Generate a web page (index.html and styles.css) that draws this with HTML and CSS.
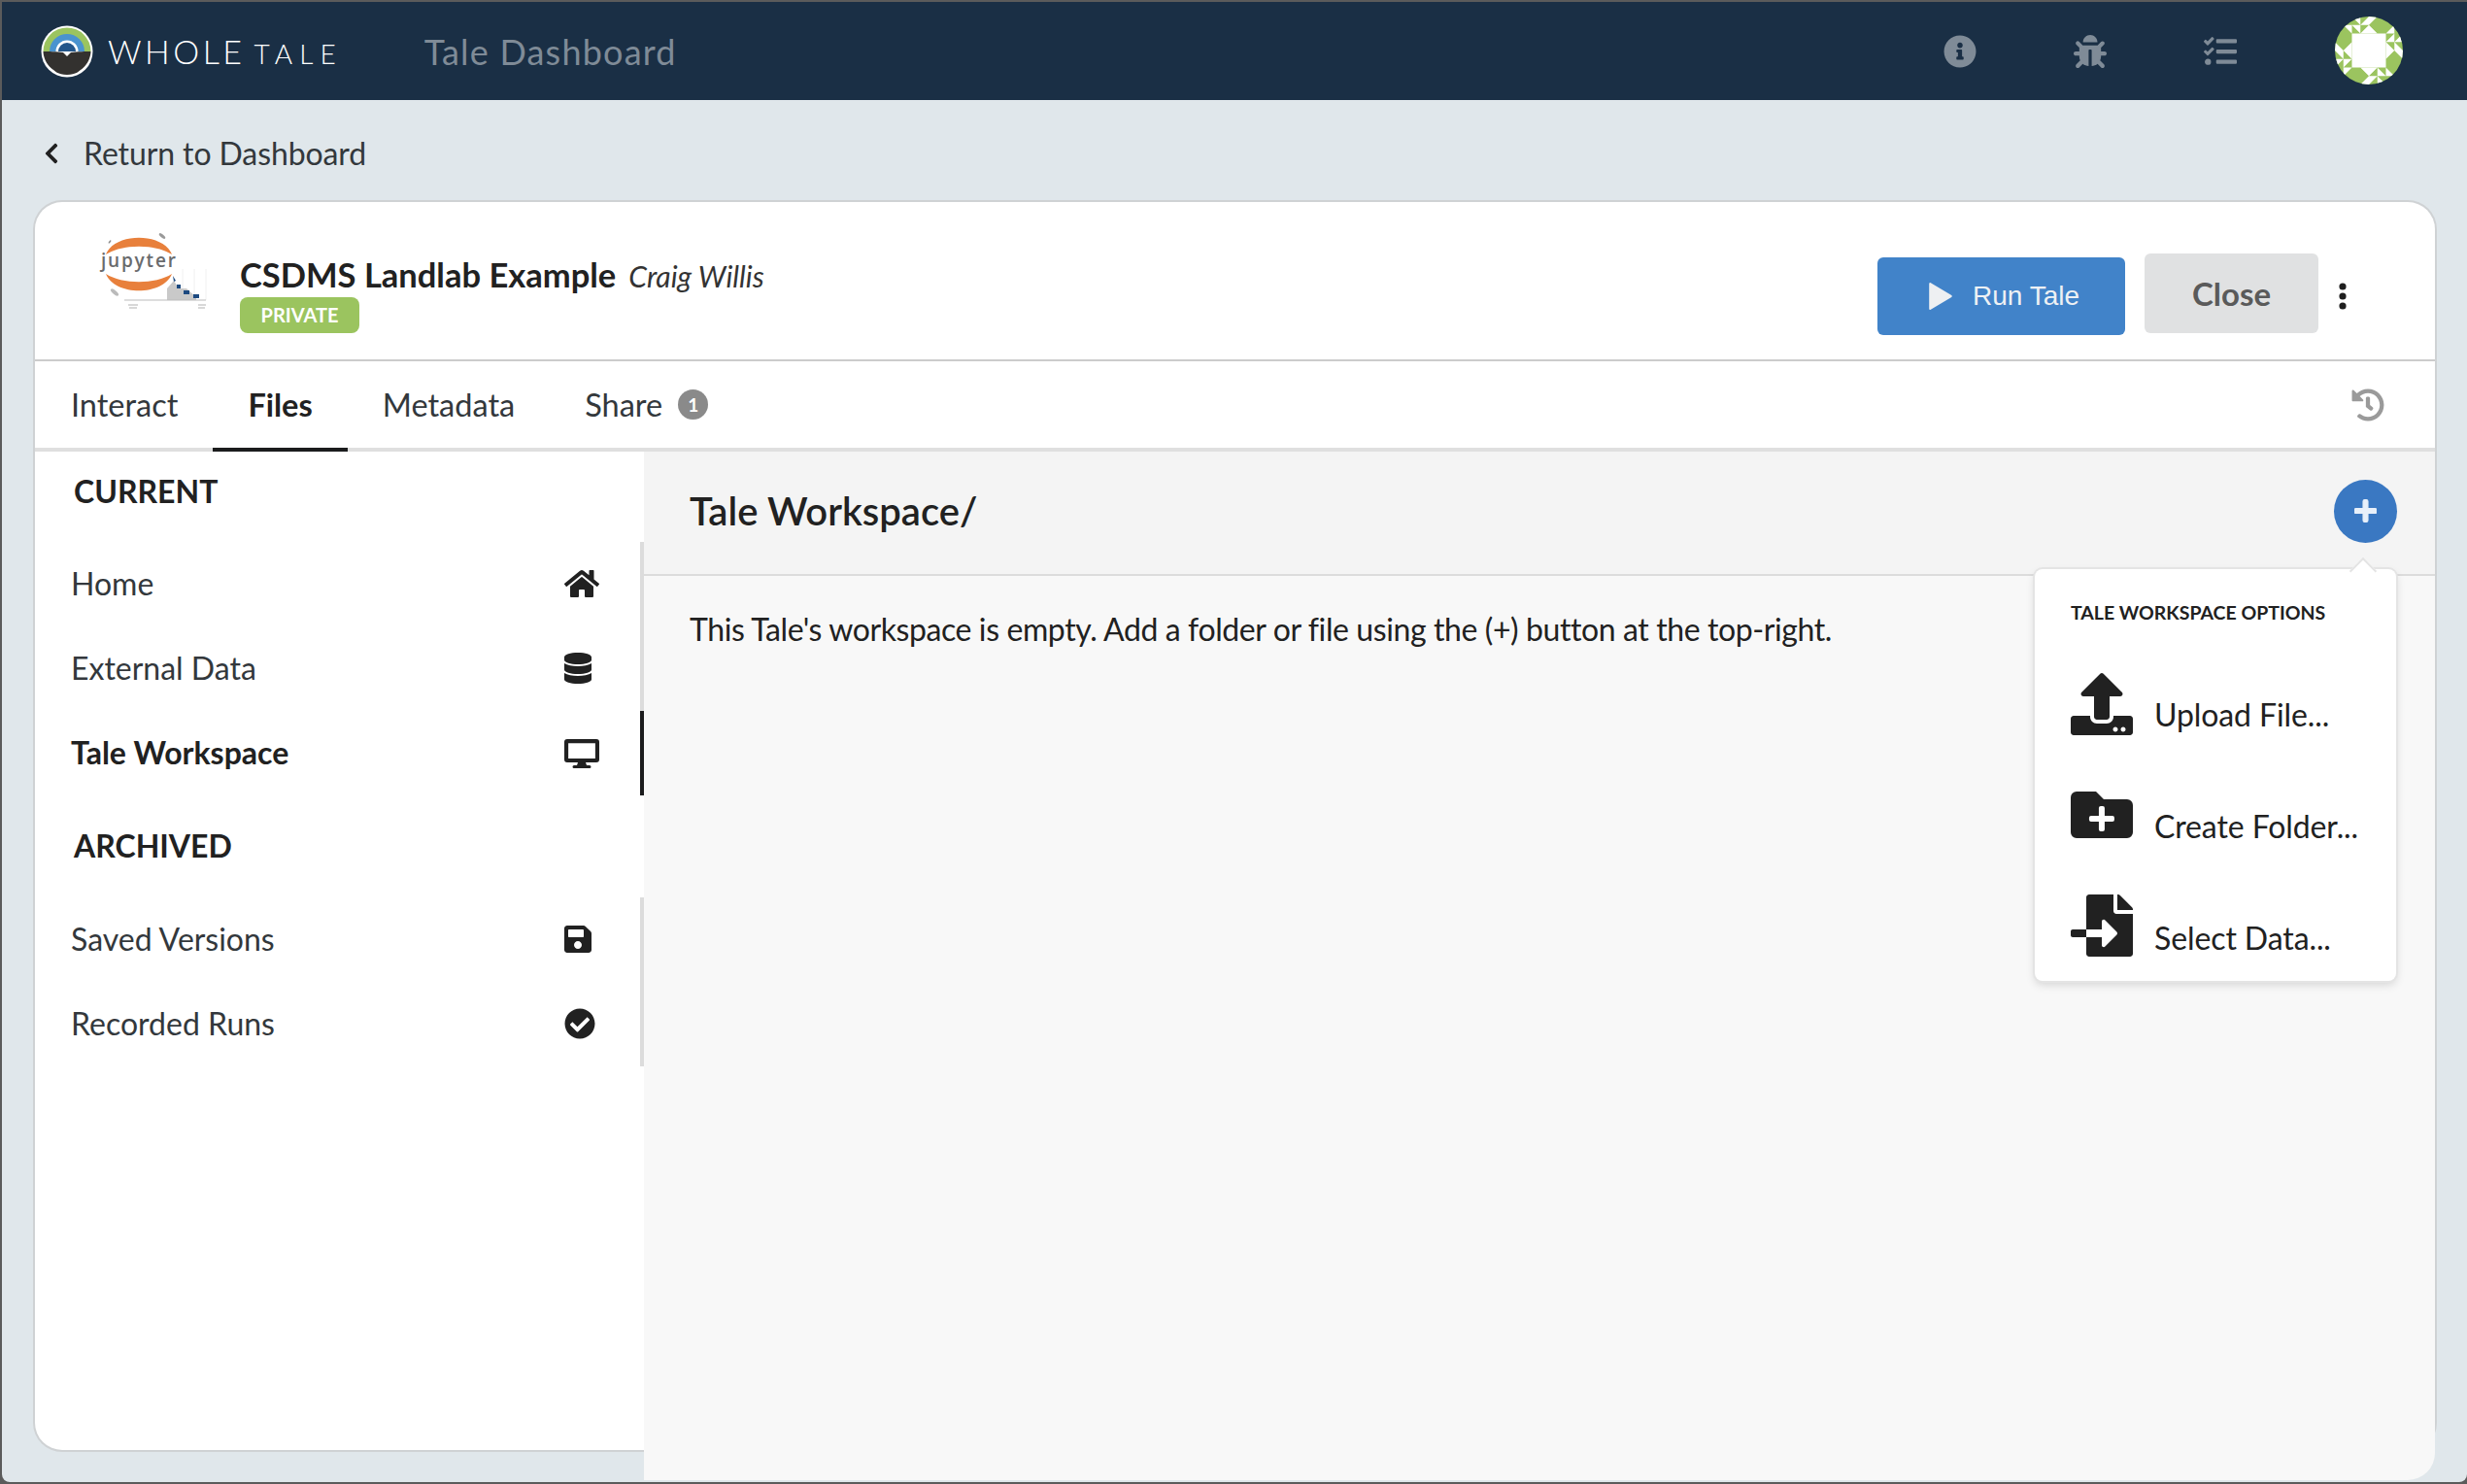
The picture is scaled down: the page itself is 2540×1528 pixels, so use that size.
FILE: index.html
```html
<!DOCTYPE html>
<html>

<head>
    <meta charset="UTF-8" />
    <title>Tale Dashboard</title>
    <link rel="stylesheet" href="styles.css">
</head>

<body>
    <div class="window">
        <nav class="navbar">
            <svg class="logo" viewBox="0 0 54 54">
                <circle cx="27" cy="27" r="26.5" fill="#fff" />
                <path d="M2.5 27a24.5 24.5 0 0 1 49 0z" fill="#9bc45f" />
                <path d="M9 27a18 18 0 0 1 36 0z" fill="#4a93cf" />
                <path d="M15.5 27a11.5 11.5 0 0 1 23 0z" fill="#fff" />
                <path d="M18 27a9 9 0 0 1 18 0z" fill="#24568a" />
                <path d="M2.5 27c4 0 15 0 20.5 1l4 4 4-4c5.5-1 16.5-1 20.5-1 0 5-3 13-8 17-4 3-7 7-16.5 7s-12.5-4-16.5-7c-5-4-8-12-8-17z" fill="#33312f" />
            </svg>
            <span class="brand">WHOLE<span class="brand-small">TALE</span></span>
            <span class="nav-title">Tale Dashboard</span>
            <div class="nav-icons">
                <svg class="nav-icon" viewBox="0 0 512 512"><path d="M256 8C119.043 8 8 119.083 8 256c0 136.997 111.043 248 248 248s248-111.003 248-248C504 119.083 392.957 8 256 8zm0 110c23.196 0 42 18.804 42 42s-18.804 42-42 42-42-18.804-42-42 18.804-42 42-42zm56 254c0 6.627-5.373 12-12 12h-88c-6.627 0-12-5.373-12-12v-24c0-6.627 5.373-12 12-12h12v-64h-12c-6.627 0-12-5.373-12-12v-24c0-6.627 5.373-12 12-12h64c6.627 0 12 5.373 12 12v100h12c6.627 0 12 5.373 12 12v24z" /></svg>
                <svg class="nav-icon" viewBox="0 0 512 512"><path d="M511.988 288.9c-.478 17.43-15.217 31.1-32.653 31.1H424v16c0 21.864-4.882 42.584-13.6 61.145l60.228 60.228c12.496 12.497 12.496 32.758 0 45.255-12.498 12.497-32.759 12.496-45.256 0l-54.736-54.736C345.886 467.965 314.351 480 280 480V236c0-6.627-5.373-12-12-12h-24c-6.627 0-12 5.373-12 12v244c-34.351 0-65.886-12.035-90.636-32.108l-54.736 54.736c-12.498 12.497-32.759 12.496-45.256 0-12.496-12.497-12.496-32.758 0-45.255l60.228-60.228C92.882 378.584 88 357.864 88 336v-16H32.666C15.23 320 .491 306.33.013 288.9-.484 270.816 14.028 256 32 256h56v-58.745l-46.628-46.628c-12.496-12.497-12.496-32.758 0-45.255 12.498-12.497 32.758-12.497 45.256 0L141.255 160h229.489l54.627-54.627c12.498-12.497 32.758-12.497 45.256 0 12.496 12.497 12.496 32.758 0 45.255L424 197.255V256h56c17.972 0 32.484 14.816 31.988 32.9zM257 0c-61.856 0-112 50.144-112 112h224C369 50.144 318.856 0 257 0z" /></svg>
                <svg class="nav-icon" viewBox="0 0 512 512"><path d="M139.61 35.5a12 12 0 0 0-17 0L58.93 98.81l-22.7-22.12a12 12 0 0 0-17 0L3.53 92.41a12 12 0 0 0 0 17l47.59 47.4a12.78 12.78 0 0 0 17.61 0l15.59-15.62L156.52 69a12.09 12.09 0 0 0 .09-17zm0 159.19a12 12 0 0 0-17 0l-63.68 63.72-22.7-22.1a12 12 0 0 0-17 0L3.53 252a12 12 0 0 0 0 17L51 316.5a12.77 12.77 0 0 0 17.6 0l15.7-15.69 72.2-72.22a12 12 0 0 0 .09-16.9zM64 368c-26.49 0-48.59 21.5-48.59 48S37.53 464 64 464a48 48 0 0 0 0-96zm432 16H208a16 16 0 0 0-16 16v32a16 16 0 0 0 16 16h288a16 16 0 0 0 16-16v-32a16 16 0 0 0-16-16zm0-320H208a16 16 0 0 0-16 16v32a16 16 0 0 0 16 16h288a16 16 0 0 0 16-16V80a16 16 0 0 0-16-16zm0 160H208a16 16 0 0 0-16 16v32a16 16 0 0 0 16 16h288a16 16 0 0 0 16-16v-32a16 16 0 0 0-16-16z" /></svg>
                <svg class="avatar" viewBox="0 0 8 8">
                    <circle cx="4" cy="4" r="4" fill="#9bc45f" />
                    <clipPath id="avatar-clip"><circle cx="4" cy="4" r="4" /></clipPath>
                    <g clip-path="url(#avatar-clip)" fill="#fff">
                        <rect x="2" y="2" width="4" height="4" />
                        <path id="quilt" d="M2 0h1v1zM3 1h1V0zM1 1h1v1zM2 1l1 1V1zM3 2h1V1zM4 1v1h1zM5 0H4v1z" />
                        <use href="#quilt" transform="rotate(90 4 4)" />
                        <use href="#quilt" transform="rotate(180 4 4)" />
                        <use href="#quilt" transform="rotate(270 4 4)" />
                    </g>
                </svg>
            </div>
        </nav>

        <a class="back-link">
            <svg class="back-icon" viewBox="0 0 320 512"><path d="M34.52 239.03L228.87 44.69c9.37-9.37 24.57-9.37 33.94 0l22.67 22.67c9.36 9.36 9.38 24.52.04 33.9L131.49 256l154.02 154.75c9.34 9.38 9.32 24.54-.04 33.9l-22.67 22.67c-9.37 9.37-24.57 9.37-33.94 0L34.52 272.97c-9.37-9.37-9.37-24.57 0-33.94z" /></svg>
            Return to Dashboard
        </a>

        <main class="card">
            <header class="card-header">
                <svg class="tale-image" viewBox="0 0 116 82">
                    <path d="M11 23C20 0 70 0 79 23 62 12 28 12 11 23z" fill="#e8803c" />
                    <path d="M11 43C28 54 62 54 79 43 70 66 20 66 11 43z" fill="#e8803c" />
                    <ellipse cx="15" cy="10" rx="2" ry=".8" fill="#888" transform="rotate(-50 15 10)" />
                    <ellipse cx="69" cy="4" rx="4" ry="1.6" fill="#999" transform="rotate(40 69 4)" />
                    <ellipse cx="20" cy="62" rx="5" ry="2" fill="#bbb" transform="rotate(40 20 62)" />
                    <path d="M90 38V70M102 38V70M114 38V70" stroke="#f0f0f0" stroke-width="1" />
                    <path d="M74 70V58l7-8 5 8h8l10 9v3z" fill="#c9c9c9" />
                    <path d="M80 45l3 5-2 1zM84 54h4v4h-4zM91 60h6v4h-6zM101 64h6v4h-6z" fill="#1d4a80" />
                    <path d="M30 70H114" stroke="#bbb" stroke-width="1" />
                    <path d="M34 75h10M35 78h8M106 75h8M106 78h7" stroke="#ccc" stroke-width="1.4" />
                    <text x="6" y="36" class="jupyter-word">jupyter</text>
                </svg>
                <div class="tale-info">
                    <div class="tale-name">
                        <span class="tale-title">CSDMS Landlab Example</span>
                        <em class="tale-author">Craig Willis</em>
                    </div>
                    <span class="label-private">PRIVATE</span>
                </div>
                <div class="tale-actions">
                    <button class="btn-run">
                        <svg class="play-icon" viewBox="0 0 24 28"><path d="M2 2L22 14 2 26z" /></svg>
                        Run Tale
                    </button>
                    <button class="btn-close">Close</button>
                    <svg class="more-icon" viewBox="0 0 10 28">
                        <circle cx="5" cy="4" r="3.6" />
                        <circle cx="5" cy="14" r="3.6" />
                        <circle cx="5" cy="24" r="3.6" />
                    </svg>
                </div>
            </header>

            <div class="tabs">
                <a class="tab">Interact</a>
                <a class="tab active">Files</a>
                <a class="tab">Metadata</a>
                <a class="tab">Share <span class="count">1</span></a>
                <svg class="history-icon" viewBox="0 0 512 512"><path d="M504 255.531c.253 136.64-111.18 248.372-247.82 248.468-59.015.042-113.223-20.53-155.822-54.911-11.077-8.94-11.905-25.541-1.839-35.607l11.267-11.267c8.609-8.609 22.353-9.551 31.891-1.984C173.062 425.135 212.781 440 256 440c101.705 0 184-82.311 184-184 0-101.705-82.311-184-184-184-48.814 0-93.149 18.969-126.068 49.932l50.754 50.754c10.08 10.08 2.941 27.314-11.313 27.314H24c-8.837 0-16-7.163-16-16V38.627c0-14.254 17.234-21.393 27.314-11.314l49.372 49.372C129.209 34.136 189.552 8 256 8c136.81 0 247.747 110.78 248 247.531zm-180.912 78.784l9.823-12.63c8.138-10.463 6.253-25.542-4.21-33.679L288 256.349V152c0-13.255-10.745-24-24-24h-16c-13.255 0-24 10.745-24 24v135.651l65.409 50.874c10.463 8.137 25.541 6.253 33.679-4.21z" /></svg>
            </div>

            <div class="files">
                <aside class="sidebar">
                    <h3 class="side-heading first">CURRENT</h3>
                    <ul class="side-list">
                        <li class="side-item">Home
                            <svg class="side-icon" viewBox="0 0 576 512"><path d="M280.37 148.26L96 300.11V464a16 16 0 0 0 16 16l112.06-.29a16 16 0 0 0 15.92-16V368a16 16 0 0 1 16-16h64a16 16 0 0 1 16 16v95.64a16 16 0 0 0 16 16.05L464 480a16 16 0 0 0 16-16V300L295.67 148.26a12.19 12.19 0 0 0-15.3 0zM571.6 251.47L488 182.56V44.05a12 12 0 0 0-12-12h-56a12 12 0 0 0-12 12v72.61L318.47 43a48 48 0 0 0-61 0L4.34 251.47a12 12 0 0 0-1.6 16.9l25.5 31A12 12 0 0 0 45.15 301l235.22-193.74a12.19 12.19 0 0 1 15.3 0L530.9 301a12 12 0 0 0 16.9-1.6l25.5-31a12 12 0 0 0-1.7-16.93z" /></svg>
                        </li>
                        <li class="side-item">External Data
                            <svg class="side-icon narrow" viewBox="0 0 448 512"><path d="M448 73.143v45.714C448 159.143 347.667 192 224 192S0 159.143 0 118.857V73.143C0 32.857 100.333 0 224 0s224 32.857 224 73.143zM448 176v102.857C448 319.143 347.667 352 224 352S0 319.143 0 278.857V176c48.125 33.143 136.208 48.572 224 48.572S399.874 209.143 448 176zm0 160v102.857C448 479.143 347.667 512 224 512S0 479.143 0 438.857V336c48.125 33.143 136.208 48.572 224 48.572S399.874 369.143 448 336z" /></svg>
                        </li>
                        <li class="side-item active">Tale Workspace
                            <svg class="side-icon" viewBox="0 0 576 512"><path d="M48 32h480a48 48 0 0 1 48 48v288a48 48 0 0 1-48 48H352l16 48h48a24 24 0 0 1 0 48H160a24 24 0 0 1 0-48h48l16-48H48a48 48 0 0 1-48-48V80a48 48 0 0 1 48-48zm18 66v252h444V98z" fill-rule="evenodd" /></svg>
                        </li>
                    </ul>
                    <h3 class="side-heading">ARCHIVED</h3>
                    <ul class="side-list">
                        <li class="side-item">Saved Versions
                            <svg class="side-icon narrow" viewBox="0 0 448 512"><path d="M433.941 129.941l-83.882-83.882A48 48 0 0 0 316.118 32H48C21.49 32 0 53.49 0 80v352c0 26.51 21.49 48 48 48h352c26.51 0 48-21.49 48-48V163.882a48 48 0 0 0-14.059-33.941zM224 416c-35.346 0-64-28.654-64-64 0-35.346 28.654-64 64-64s64 28.654 64 64c0 35.346-28.654 64-64 64zm96-304.52V212c0 6.627-5.373 12-12 12H76c-6.627 0-12-5.373-12-12V108c0-6.627 5.373-12 12-12h228.52c3.183 0 6.235 1.264 8.485 3.515l3.48 3.48A11.996 11.996 0 0 1 320 111.48z" /></svg>
                        </li>
                        <li class="side-item">Recorded Runs
                            <svg class="side-icon round" viewBox="0 0 512 512"><path d="M504 256c0 136.967-111.033 248-248 248S8 392.967 8 256 119.033 8 256 8s248 111.033 248 248zM227.314 387.314l184-184c6.248-6.248 6.248-16.379 0-22.627l-22.627-22.627c-6.248-6.249-16.379-6.249-22.628 0L216 308.118l-70.059-70.059c-6.248-6.248-16.379-6.248-22.628 0l-22.627 22.627c-6.248 6.248-6.248 16.379 0 22.627l104 104c6.249 6.249 16.379 6.249 22.628.001z" /></svg>
                        </li>
                    </ul>
                </aside>

                <section class="panel">
                    <div class="panel-header">
                        <h2 class="panel-title">Tale Workspace/</h2>
                        <button class="btn-add">
                            <svg class="add-icon" viewBox="0 0 448 512"><path d="M416 208H272V64c0-17.67-14.33-32-32-32h-32c-17.67 0-32 14.33-32 32v144H32c-17.67 0-32 14.33-32 32v32c0 17.67 14.33 32 32 32h144v144c0 17.67 14.33 32 32 32h32c17.67 0 32-14.33 32-32V304h144c17.67 0 32-14.33 32-32v-32c0-17.67-14.33-32-32-32z" /></svg>
                        </button>
                    </div>
                    <p class="panel-text">This Tale's workspace is empty. Add a folder or file using the (+) button at the top-right.</p>

                    <div class="popup">
                        <div class="popup-heading">TALE WORKSPACE OPTIONS</div>
                        <div class="popup-item upload">
                            <svg class="popup-icon" viewBox="0 0 512 512"><path d="M296 384h-80c-13.3 0-24-10.7-24-24V192h-87.7c-17.8 0-26.7-21.5-14.1-34.1L242.3 5.7c7.5-7.5 19.8-7.5 27.3 0l152.2 152.2c12.6 12.6 3.7 34.1-14.1 34.1H320v168c0 13.3-10.7 24-24 24zm216-8v112c0 13.3-10.7 24-24 24H24c-13.3 0-24-10.7-24-24V376c0-13.3 10.7-24 24-24h136v8c0 30.9 25.1 56 56 56h80c30.9 0 56-25.1 56-56v-8h136c13.3 0 24 10.7 24 24zm-124 88c0-11-9-20-20-20s-20 9-20 20 9 20 20 20 20-9 20-20zm64 0c0-11-9-20-20-20s-20 9-20 20 9 20 20 20 20-9 20-20z" /></svg>
                            Upload File...
                        </div>
                        <div class="popup-item folder">
                            <svg class="popup-icon" viewBox="0 0 512 512"><path d="M464,128H272L208,64H48A48,48,0,0,0,0,112V400a48,48,0,0,0,48,48H464a48,48,0,0,0,48-48V176A48,48,0,0,0,464,128ZM359.5,296a16,16,0,0,1-16,16h-64v64a16,16,0,0,1-16,16h-16a16,16,0,0,1-16-16V312h-64a16,16,0,0,1-16-16V280a16,16,0,0,1,16-16h64V200a16,16,0,0,1,16-16h16a16,16,0,0,1,16,16v64h64a16,16,0,0,1,16,16Z" /></svg>
                            Create Folder...
                        </div>
                        <div class="popup-item">
                            <svg class="popup-icon" viewBox="0 0 512 512"><path d="M16 288c-8.8 0-16 7.2-16 16v32c0 8.8 7.2 16 16 16h112v-64zm489-183L407.1 7c-4.5-4.5-10.6-7-17-7H384v128h128v-6.1c0-6.3-2.5-12.4-7-16.9zm-153 31V0H152c-13.3 0-24 10.7-24 24v264h128v-65.2c0-14.3 17.3-21.4 27.4-11.3L379 308c6.6 6.7 6.6 17.4 0 24l-95.7 96.4c-10.1 10.1-27.4 3-27.4-11.3V352H128v136c0 13.3 10.7 24 24 24h336c13.3 0 24-10.7 24-24V160H376c-13.2 0-24-10.8-24-24z" /></svg>
                            Select Data...
                        </div>
                    </div>
                </section>
            </div>
        </main>
    </div>
</body>

</html>
```

FILE: styles.css
```css
* {
    box-sizing: border-box;
}

html,
body {
    margin: 0;
    padding: 0;
    height: 100%;
    overflow: hidden;
    background-color: #5b5b5b;
}

body {
    padding: 2px 0 2px 2px;
    font-family: "Lato", "Noto Sans", sans-serif;
    color: #212121;
}

.window {
    height: 1524px;
    background-color: #e0e7eb;
    border-bottom-left-radius: 8px;
    border-bottom-right-radius: 8px;
}

/* top bar */
.navbar {
    display: flex;
    align-items: center;
    height: 101px;
    padding-left: 40px;
    background-color: #1a2f45;
}

.logo {
    width: 54px;
    height: 54px;
}

.brand {
    margin-left: 15px;
    font-size: 34px;
    font-weight: 300;
    letter-spacing: 3.5px;
    color: #fff;
}

.brand-small {
    margin-left: 9px;
    font-size: 28px;
    letter-spacing: 7px;
}

.nav-title {
    margin-left: 84px;
    font-size: 36px;
    font-weight: 400;
    letter-spacing: 1.2px;
    color: #7f8b97;
}

.nav-icons {
    display: flex;
    align-items: center;
    gap: 100px;
    margin-left: auto;
    padding-right: 66px;
}

.nav-icon {
    width: 34px;
    height: 34px;
    fill: #7f8b97;
}

.avatar {
    width: 70px;
    height: 70px;
    margin-left: 1px;
    margin-bottom: 1px;
}

/* return link */
.back-link {
    display: flex;
    align-items: center;
    height: 105px;
    padding: 4px 0 0 40px;
    font-size: 32px;
    letter-spacing: -.1px;
    color: #33383c;
}

.back-icon {
    width: 22px;
    height: 24px;
    margin-right: 22px;
    fill: #212121;
}

/* main card */
.card {
    display: flex;
    flex-direction: column;
    height: 1285px;
    margin: 0 33px 0 34px;
    background-color: #fff;
    border-radius: 28px;
    box-shadow: 0 0 0 2px #cfd2d4;
}

.card-header {
    display: flex;
    align-items: center;
    height: 164px;
    padding: 0 90px 0 62px;
    border-bottom: 2px solid #cccccc;
}

.tale-image {
    width: 116px;
    height: 82px;
    margin-top: -18px;
}

.jupyter-word {
    font-family: "Open Sans", "Noto Sans", sans-serif;
    font-size: 19px;
    font-weight: 600;
    letter-spacing: 1.8px;
    fill: #6a6b6d;
}

.tale-info {
    margin: 26px 0 0 33px;
}

.tale-title {
    font-size: 34.5px;
    font-weight: 700;
}

.tale-author {
    margin-left: 9px;
    font-size: 30px;
    color: #333;
}

.label-private {
    display: block;
    width: 123px;
    height: 37px;
    margin-top: 3px;
    border-radius: 8px;
    background-color: #9bc45f;
    color: #fff;
    font-size: 20px;
    font-weight: 700;
    line-height: 37px;
    text-align: center;
}

.tale-actions {
    display: flex;
    align-items: center;
    margin-top: 32px;
    margin-left: auto;
}

.btn-run {
    display: flex;
    align-items: center;
    width: 255px;
    height: 80px;
    padding: 0 0 0 52px;
    border: none;
    border-radius: 6px;
    background-color: #4183c9;
    color: #eef1f4;
    font-family: "Liberation Sans", sans-serif;
    font-size: 28px;
}

.play-icon {
    width: 26px;
    height: 30px;
    margin-right: 20px;
    fill: #eef0f2;
    stroke: #eef0f2;
    stroke-width: 2;
    stroke-linejoin: round;
}

.btn-close {
    width: 179px;
    height: 82px;
    margin: 0 0 6px 20px;
    border: none;
    border-radius: 6px;
    background-color: #e0e1e2;
    color: #5a5a5a;
    font-family: inherit;
    font-size: 33px;
    font-weight: 700;
}

.more-icon {
    width: 10px;
    height: 28px;
    margin-left: 20px;
    fill: #1f1f1f;
}

/* tabs */
.tabs {
    display: flex;
    align-items: stretch;
    height: 93px;
    padding-left: 1px;
    border-bottom: 4px solid #dfdfdf;
}

.tab {
    display: flex;
    align-items: center;
    height: 93px;
    padding: 0 36px;
    border-bottom: 4px solid transparent;
    font-size: 32.5px;
    color: #33383c;
}

.tab.active {
    border-bottom-color: #1b1c1d;
    font-weight: 700;
    color: #212121;
}

.count {
    display: inline-block;
    width: 31px;
    height: 31px;
    margin-left: 16px;
    border-radius: 50%;
    background-color: #8a8a8a;
    color: #fff;
    font-size: 19px;
    font-weight: 700;
    line-height: 31px;
    text-align: center;
}

.history-icon {
    align-self: center;
    width: 34px;
    height: 34px;
    margin-left: auto;
    margin-right: 52px;
    fill: #9a9a9a;
}

/* files tab */
.files {
    display: flex;
    flex: 1;
    min-height: 0;
}

.sidebar {
    width: 627px;
    flex-shrink: 0;
}

.side-heading {
    margin: 32px 0 33px;
    padding-left: 40px;
    font-size: 32px;
    font-weight: 700;
    line-height: 40px;
}

.side-heading.first {
    margin: 21px 0 32px;
}

.side-list {
    margin: 0;
    padding: 0;
    list-style: none;
}

.side-item {
    display: flex;
    align-items: center;
    justify-content: space-between;
    height: 87px;
    padding: 0 42px 2px 37px;
    border-right: 4px solid #dcdcdc;
    font-size: 32px;
    color: #33383c;
}

.side-item.active {
    border-right-color: #1b1c1d;
    font-weight: 700;
    color: #212121;
}

.side-icon {
    width: 36px;
    height: 32px;
    fill: #212121;
}

.side-icon.narrow {
    width: 28px;
    margin-right: 8px;
}

.side-icon.round {
    margin-right: 2px;
}

.panel {
    position: relative;
    flex: 1;
    margin-bottom: -31px;
    background-color: #f8f8f8;
    border-bottom-right-radius: 28px;
}

.panel-header {
    display: flex;
    align-items: center;
    justify-content: space-between;
    height: 128px;
    padding: 0 39px 4px 47px;
    background-color: #f4f4f4;
    border-bottom: 2px solid #dcdcdc;
}

.panel-title {
    margin: 0;
    font-size: 40px;
    font-weight: 600;
}

.btn-add {
    display: flex;
    align-items: center;
    justify-content: center;
    width: 65px;
    height: 65px;
    padding: 0;
    border: none;
    border-radius: 50%;
    background-color: #3a78c2;
}

.add-icon {
    width: 23px;
    height: 26px;
    fill: #e8f0fa;
    stroke: #e8f0fa;
    stroke-width: 24;
}

.panel-text {
    margin: 0;
    padding: 35px 47px;
    font-size: 32px;
    line-height: 40px;
    letter-spacing: -.4px;
}

/* add menu */
.popup {
    position: absolute;
    top: 121px;
    right: 40px;
    width: 372px;
    height: 424px;
    padding: 32px 20px 0 37px;
    border-radius: 8px;
    background-color: #fff;
    box-shadow: 0 0 0 2px #e4e4e4, 0 4px 10px rgba(0, 0, 0, .15);
}

.popup::before {
    content: "";
    position: absolute;
    top: -8px;
    right: 24px;
    width: 18px;
    height: 18px;
    background-color: #fff;
    border-top: 2px solid #e4e4e4;
    border-left: 2px solid #e4e4e4;
    transform: rotate(45deg);
}

.popup-heading {
    position: relative;
    height: 60px;
    font-size: 19.5px;
    font-weight: 700;
    line-height: 26px;
}

.popup-item {
    display: flex;
    align-items: center;
    height: 115px;
    font-size: 32px;
    letter-spacing: -.1px;
    white-space: nowrap;
}

.popup-icon {
    flex-shrink: 0;
    width: 64px;
    height: 64px;
    margin: 0 22px 25px 0;
    fill: #212121;
}

.upload .popup-icon {
    margin-bottom: 21px;
}

.folder .popup-icon {
    margin-bottom: 23px;
}
```
